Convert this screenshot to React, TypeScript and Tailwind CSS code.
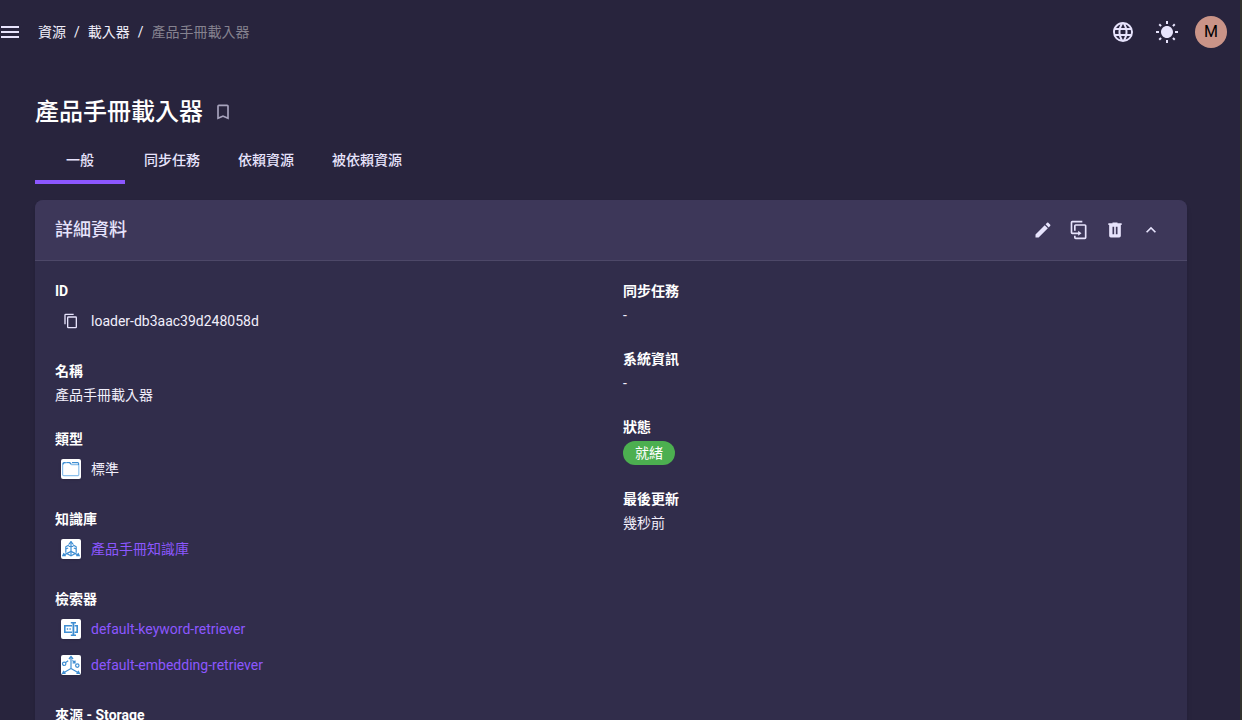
import type { ReactNode } from "react";

const icons = {
  menu: "M3,6H21V8H3V6M3,11H21V13H3V11M3,16H21V18H3V16Z",
  web: "M16.36,14C16.44,13.34 16.5,12.68 16.5,12C16.5,11.32 16.44,10.66 16.36,10H19.74C19.9,10.64 20,11.31 20,12C20,12.69 19.9,13.36 19.74,14M14.59,19.56C15.19,18.45 15.65,17.25 15.97,16H18.92C17.96,17.65 16.43,18.93 14.59,19.56M14.34,14H9.66C9.56,13.34 9.5,12.68 9.5,12C9.5,11.32 9.56,10.65 9.66,10H14.34C14.43,10.65 14.5,11.32 14.5,12C14.5,12.68 14.43,13.34 14.34,14M12,19.96C11.17,18.76 10.5,17.43 10.09,16H13.91C13.5,17.43 12.83,18.76 12,19.96M8,8H5.08C6.03,6.34 7.57,5.06 9.4,4.44C8.8,5.55 8.35,6.75 8,8M5.08,16H8C8.35,17.25 8.8,18.45 9.4,19.56C7.57,18.93 6.03,17.65 5.08,16M4.26,14C4.1,13.36 4,12.69 4,12C4,11.31 4.1,10.64 4.26,10H7.64C7.56,10.66 7.5,11.32 7.5,12C7.5,12.68 7.56,13.34 7.64,14M12,4.03C12.83,5.23 13.5,6.57 13.91,8H10.09C10.5,6.57 11.17,5.23 12,4.03M18.92,8H15.97C15.65,6.75 15.19,5.55 14.59,4.44C16.43,5.07 17.96,6.34 18.92,8M12,2C6.47,2 2,6.5 2,12A10,10 0 0,0 12,22A10,10 0 0,0 22,12A10,10 0 0,0 12,2Z",
  sun: "M3.55 19.09L4.96 20.5L6.76 18.71L5.34 17.29M12 6C8.69 6 6 8.69 6 12S8.69 18 12 18 18 15.31 18 12C18 8.68 15.31 6 12 6M20 13H23V11H20M17.24 18.71L19.04 20.5L20.45 19.09L18.66 17.29M20.45 5L19.04 3.6L17.24 5.39L18.66 6.81M13 1H11V4H13M6.76 5.39L4.96 3.6L3.55 5L5.34 6.81L6.76 5.39M1 13H4V11H1M13 20H11V23H13",
  bookmark: "M17,18L12,15.82L7,18V5H17M17,3H7A2,2 0 0,0 5,5V21L12,18L19,21V5C19,3.89 18.1,3 17,3Z",
  pencil: "M20.71,7.04C21.1,6.65 21.1,6 20.71,5.63L18.37,3.29C18,2.9 17.35,2.9 16.96,3.29L15.12,5.12L18.87,8.87M3,17.25V21H6.75L17.81,9.93L14.06,6.18L3,17.25Z",
  duplicate: "M11,17H4A2,2 0 0,1 2,15V3A2,2 0 0,1 4,1H16V3H4V15H11V13L15,16L11,19V17M19,21V7H8V13H6V7A2,2 0 0,1 8,5H19A2,2 0 0,1 21,7V21A2,2 0 0,1 19,23H8A2,2 0 0,1 6,21V19H8V21H19Z",
  trash: "M9,3V4H4V6H5V19A2,2 0 0,0 7,21H17A2,2 0 0,0 19,19V6H20V4H15V3H9M9,8H11V17H9V8M13,8H15V17H13V8Z",
  chevronUp: "M7.41,15.41L12,10.83L16.59,15.41L18,14L12,8L6,14L7.41,15.41Z",
  copy: "M19,21H8V7H19M19,5H8A2,2 0 0,0 6,7V21A2,2 0 0,0 8,23H19A2,2 0 0,0 21,21V7A2,2 0 0,0 19,5M16,1H4A2,2 0 0,0 2,3V17H4V3H16V1Z",
};

const tabs = ["一般", "同步任務", "依賴資源", "被依賴資源"];

const actions: { icon: keyof typeof icons; label: string }[] = [
  { icon: "pencil", label: "編輯" },
  { icon: "duplicate", label: "複製" },
  { icon: "trash", label: "刪除" },
  { icon: "chevronUp", label: "收合" },
];

function Icon({ name, className = "size-5" }: { name: keyof typeof icons; className?: string }) {
  return (
    <svg viewBox="0 0 24 24" fill="currentColor" className={className} aria-hidden="true">
      <path d={icons[name]} />
    </svg>
  );
}

function IconButton({ name, label, className }: { name: keyof typeof icons; label: string; className?: string }) {
  return (
    <button type="button" aria-label={label} className="flex size-9 items-center justify-center text-[#e7e3fc]">
      <Icon name={name} className={className} />
    </button>
  );
}

function Tile({ children }: { children: ReactNode }) {
  return (
    <span className="flex w-9 shrink-0 justify-center pr-1">
      <svg
        viewBox="0 0 20 20"
        fill="none"
        stroke="#3f8ed2"
        strokeWidth="1.2"
        className="size-5 rounded-xs bg-white shadow-sm"
        aria-hidden="true"
      >
        {children}
      </svg>
    </span>
  );
}

function FolderTile() {
  return (
    <Tile>
      <path stroke="#8cc0ec" d="M1.6 5.2v10.2a1.2 1.2 0 0 0 1.2 1.2h13.8a1.2 1.2 0 0 0 1.2-1.2V6.8a1.2 1.2 0 0 0-1.2-1.2h-6L8.8 3.6H3.2a1.6 1.6 0 0 0-1.600 1.600Z" />
      <path d="M1.8 5.400 3 3.600h1.600M5.600 3.500h3l1.400 1.600M11 3.600h5.600a1 1 0 0 1 1 1V6" />
    </Tile>
  );
}

function KnowledgeTile() {
  return (
    <Tile>
      <path d="M10 2.500V16.500" />
      <path d="M8 5.200 10 2.800l2 2.400M7.600 7.500h4.800" />
      <path d="M8.200 5.800 4.800 7.800v6M11.800 5.800l3.400 2v6M6 14.800l4 2 4-2M4.800 10l2.400-1M15.200 10l-2.400-1" />
      <path d="M10 12.400 2.200 16.400M10 12.400l7.800 4M3 14l-1.200 2.600h3M17 14l1.200 2.600h-3" />
    </Tile>
  );
}

function KeywordTile() {
  return (
    <Tile>
      <path strokeWidth="1.600" d="M11 6.800H3.800v6.400H11M13.600 6.800h2.600v6.400h-2.600" />
      <path strokeWidth="1.800" d="M12.400 4v12" />
      <path strokeWidth="1.600" d="M9.800 3.800h5.200M9.800 16.200h5.200" />
      <path strokeWidth="1.600" d="M5.800 10h1.400M8.400 10h1.400" />
    </Tile>
  );
}

function EmbeddingTile() {
  return (
    <Tile>
      <path d="M10 1.800v11.600L2.200 18M10 13.400l7.800 4.600" />
      <path strokeWidth="1.500" d="M8 4 10 1.600 12 4M3 15.800l-1.200 2.400h2.800M17 15.800l1.200 2.400h-2.800" />
      <circle cx="3.200" cy="8.800" r="1.700" />
      <circle cx="16.300" cy="10.600" r="1.700" />
      <path d="M4.600 7.600 7.200 5.800M11.400 5.400 14 7.400M14 5.400v2.400h-2.400" />
    </Tile>
  );
}

function Field({ label, children }: { label: string; children: ReactNode }) {
  return (
    <div className="pb-5 leading-6">
      <dt className="font-bold text-white">{label}</dt>
      {children}
    </div>
  );
}

function LinkRow({ tile, children }: { tile: ReactNode; children: string }) {
  return (
    <dd className="flex h-9 items-center">
      {tile}
      <a href="#" className="text-[#8c57ff]">
        {children}
      </a>
    </dd>
  );
}

function App() {
  return (
    <div
      lang="zh-Hant"
      className="h-screen overflow-hidden border-r-2 border-[#33332f] bg-[#28243d] font-[Roboto,'Noto_Sans_CJK_TC',sans-serif] text-sm text-[#f1effb]"
    >
      <header className="flex h-16 items-center pr-[13px]">
        <button type="button" aria-label="選單" className="-ml-0.5 text-[#e7e3fc]">
          <Icon name="menu" className="size-6" />
        </button>
        <nav aria-label="breadcrumb" className="ml-4 flex gap-2">
          <a href="#">資源</a>
          <span>/</span>
          <a href="#">載入器</a>
          <span>/</span>
          <span className="text-[#85828f]">產品手冊載入器</span>
        </nav>
        <div className="ml-auto flex items-center gap-2">
          <IconButton name="web" label="語言" className="size-6" />
          <IconButton name="sun" label="主題" className="size-6" />
          <button type="button" className="ml-0.5 size-8 rounded-full bg-[#ca9488] text-base text-black">
            M
          </button>
        </div>
      </header>

      <main className="pt-7 pr-[53px] pl-[35px]">
        <div className="flex h-10 items-center gap-2.5">
          <h1 className="text-2xl font-medium text-white">產品手冊載入器</h1>
          <button type="button" aria-label="書籤" className="text-[#a7a3bd]">
            <Icon name="bookmark" />
          </button>
        </div>

        <div role="tablist" className="mt-1 flex h-12">
          {tabs.map((tab, i) => (
            <button
              key={tab}
              type="button"
              role="tab"
              aria-selected={i === 0}
              className="min-w-[90px] border-y-4 border-transparent px-[19px] font-medium text-[#e7e3fc] aria-selected:border-b-[#8c57ff]"
            >
              {tab}
            </button>
          ))}
        </div>

        <section className="mt-4 rounded-lg bg-[#312d4b] shadow-md">
          <div className="flex h-[61px] items-center justify-between rounded-t-lg border-b border-[#4d4868] bg-[#3d3759] pr-[18px] pl-5">
            <h2 className="text-lg font-medium text-[#e7e3fc]">詳細資料</h2>
            <div className="flex">
              {actions.map((action) => (
                <IconButton key={action.icon} name={action.icon} label={action.label} />
              ))}
            </div>
          </div>
          <div className="grid grid-cols-2 px-2 pt-[18px]">
            <dl className="px-3">
              <Field label="ID">
                <dd className="flex h-9 items-center">
                  <button type="button" aria-label="複製 ID" className="flex w-9 justify-center pr-1 text-[#e7e3fc]">
                    <Icon name="copy" className="size-4" />
                  </button>
                  loader-db3aac39d248058d
                </dd>
              </Field>
              <Field label="名稱">
                <dd>產品手冊載入器</dd>
              </Field>
              <Field label="類型">
                <dd className="flex h-9 items-center">
                  <FolderTile />
                  標準
                </dd>
              </Field>
              <Field label="知識庫">
                <LinkRow tile={<KnowledgeTile />}>產品手冊知識庫</LinkRow>
              </Field>
              <Field label="檢索器">
                <LinkRow tile={<KeywordTile />}>default-keyword-retriever</LinkRow>
                <LinkRow tile={<EmbeddingTile />}>default-embedding-retriever</LinkRow>
              </Field>
              <Field label="來源 - Storage">{null}</Field>
            </dl>
            <dl className="px-3">
              <Field label="同步任務">
                <dd>-</dd>
              </Field>
              <Field label="系統資訊">
                <dd>-</dd>
              </Field>
              <Field label="狀態">
                <dd className="flex h-7 items-center">
                  <span className="rounded-full bg-[#4caf50] px-3 text-white">就緒</span>
                </dd>
              </Field>
              <Field label="最後更新">
                <dd>幾秒前</dd>
              </Field>
            </dl>
          </div>
        </section>
      </main>
    </div>
  );
}

export default App;
